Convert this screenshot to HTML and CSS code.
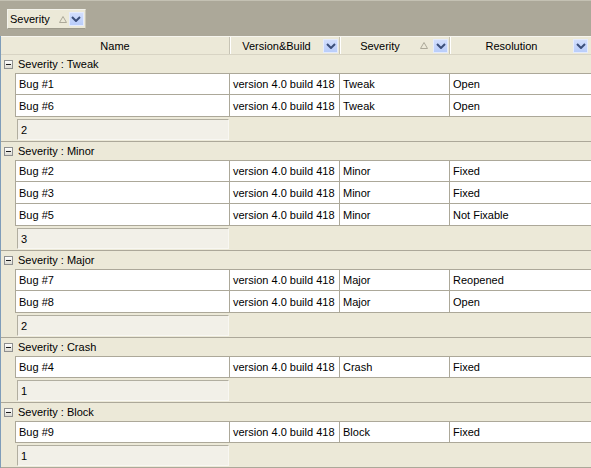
FILE: index.html
```html
<!DOCTYPE html>
<html>
<head>
<meta charset="utf-8">
<link rel="stylesheet" href="styles.css">
</head>
<body>
<div class="panel">
  <div class="gbtn">
    <span class="gtext">Severity</span>
    <svg class="tri" width="8" height="7" viewBox="0 0 8 7"><polygon points="4,0.5 7.5,6.5 0.5,6.5" fill="none" stroke="#aca899" stroke-width="1"/></svg>
    <span class="dd"><svg width="10" height="6" viewBox="0 0 10 6"><path d="M1 1 L5 5 L9 1" fill="none" stroke="#3b4f7a" stroke-width="2"/></svg></span>
  </div>
</div>
<div class="grid">
  <div class="hdr">
    <div class="hc hname"><span class="ht">Name</span></div>
    <div class="hc"><span class="ht">Version&amp;Build</span><span class="dd"><svg width="10" height="6" viewBox="0 0 10 6"><path d="M1 1 L5 5 L9 1" fill="none" stroke="#3b4f7a" stroke-width="2"/></svg></span></div>
    <div class="hc"><span class="ht">Severity</span><svg class="tri" width="8" height="7" viewBox="0 0 8 7"><polygon points="4,0.5 7.5,6.5 0.5,6.5" fill="none" stroke="#aca899" stroke-width="1"/></svg><span class="dd"><svg width="10" height="6" viewBox="0 0 10 6"><path d="M1 1 L5 5 L9 1" fill="none" stroke="#3b4f7a" stroke-width="2"/></svg></span></div>
    <div class="hc hlast"><span class="ht">Resolution</span><span class="dd"><svg width="10" height="6" viewBox="0 0 10 6"><path d="M1 1 L5 5 L9 1" fill="none" stroke="#3b4f7a" stroke-width="2"/></svg></span></div>
  </div>

  <div class="grp"><span class="minus"></span>Severity : Tweak</div>
  <div class="row"><div class="c">Bug #1</div><div class="c">version 4.0 build 418</div><div class="c">Tweak</div><div class="c">Open</div></div>
  <div class="row"><div class="c">Bug #6</div><div class="c">version 4.0 build 418</div><div class="c">Tweak</div><div class="c">Open</div></div>
  <div class="sum"><div class="sbox">2</div></div>

  <div class="grp"><span class="minus"></span>Severity : Minor</div>
  <div class="row"><div class="c">Bug #2</div><div class="c">version 4.0 build 418</div><div class="c">Minor</div><div class="c">Fixed</div></div>
  <div class="row"><div class="c">Bug #3</div><div class="c">version 4.0 build 418</div><div class="c">Minor</div><div class="c">Fixed</div></div>
  <div class="row"><div class="c">Bug #5</div><div class="c">version 4.0 build 418</div><div class="c">Minor</div><div class="c">Not Fixable</div></div>
  <div class="sum"><div class="sbox">3</div></div>

  <div class="grp"><span class="minus"></span>Severity : Major</div>
  <div class="row"><div class="c">Bug #7</div><div class="c">version 4.0 build 418</div><div class="c">Major</div><div class="c">Reopened</div></div>
  <div class="row"><div class="c">Bug #8</div><div class="c">version 4.0 build 418</div><div class="c">Major</div><div class="c">Open</div></div>
  <div class="sum"><div class="sbox">2</div></div>

  <div class="grp"><span class="minus"></span>Severity : Crash</div>
  <div class="row"><div class="c">Bug #4</div><div class="c">version 4.0 build 418</div><div class="c">Crash</div><div class="c">Fixed</div></div>
  <div class="sum"><div class="sbox">1</div></div>

  <div class="grp"><span class="minus"></span>Severity : Block</div>
  <div class="row"><div class="c">Bug #9</div><div class="c">version 4.0 build 418</div><div class="c">Block</div><div class="c">Fixed</div></div>
  <div class="sum"><div class="sbox">1</div></div>
</div>
</body>
</html>
```
FILE: styles.css
```css
html, body {
  margin: 0;
  padding: 0;
  width: 591px;
  height: 468px;
  overflow: hidden;
  background: #ece9d8;
  font-family: "Liberation Sans", Arial, sans-serif;
  font-size: 11px;
  color: #000;
}
.panel {
  height: 36px;
  background: #aca899;
  border-top: 1px solid #c4c1b3;
  box-sizing: border-box;
  padding: 8px 0 0 7px;
}
.gbtn {
  display: inline-flex;
  align-items: center;
  height: 20px;
  width: 79px;
  box-sizing: border-box;
  background: #ece9d8;
  border: 1px solid #f4f3ec;
  border-right-color: #c9c6b6;
  border-bottom-color: #9d9a8b;
  padding-left: 2px;
}
.gtext { font-size: 11px; }
.gbtn .tri { margin-left: 9px; }
.gbtn .dd { margin-left: 2px; }
.dd {
  display: inline-flex;
  align-items: center;
  justify-content: center;
  width: 15px;
  height: 14px;
  box-sizing: border-box;
  background: linear-gradient(#d2defc, #b9cdfa);
  border: 1px solid #e4ebfd;
}
.grid {
  border-left: 1px solid #7f9db9;
}
.hdr {
  display: grid;
  grid-template-columns: 229px 110px 110px 1fr;
  height: 19px;
  background: #ece9d8;
  border-bottom: 1px solid #d8d4c4;
  border-top: 1px solid #f6f5ee;
  box-sizing: border-box;
}
.hc {
  display: flex;
  align-items: center;
  border-right: 1px solid #c7c4b5;
  box-shadow: inset 1px 0 0 #fff;
  padding-right: 1px;
}
.hname { box-shadow: none; padding-right: 0; }
.hlast { border-right: none; padding-right: 3px; }
.ht {
  flex: 1;
  text-align: center;
}
.hc .tri { margin-right: 5px; }
.grp {
  display: flex;
  align-items: center;
  height: 18px;
  box-sizing: border-box;
  padding-left: 3px;
  background: #ece9d8;
}
.minus {
  width: 9px;
  height: 9px;
  box-sizing: border-box;
  border: 1px solid #8e8f8f;
  background: linear-gradient(#ffffff, #dcdbd2);
  margin-right: 5px;
  position: relative;
}
.minus::after {
  content: "";
  position: absolute;
  left: 1px;
  top: 3px;
  width: 5px;
  height: 1px;
  background: #1c1c1c;
}
.row {
  display: grid;
  grid-template-columns: 14px 215px 110px 110px 1fr;
  height: 22px;
}
.row::before {
  content: "";
  background: #ece9d8;
}
.grp + .row .c {
  border-top: 1px solid #aca899;
}
.c {
  background: #fff;
  border-right: 1px solid #aca899;
  border-bottom: 1px solid #aca899;
  display: flex;
  align-items: center;
  padding-left: 3px;
  white-space: nowrap;
  overflow: hidden;
  color: #000;
}
.row .c:first-child { border-left: 1px solid #aca899; }
.row .c:last-child { border-right: none; }
.sum {
  height: 25px;
  box-sizing: border-box;
  padding: 2px 0 0 16px;
  border-bottom: 1px solid #aca899;
  background: #ece9d8;
}
.sbox {
  width: 212px;
  height: 21px;
  box-sizing: border-box;
  background: #f2f0e8;
  border-top: 1px solid #b1aea0;
  border-left: 1px solid #b1aea0;
  border-right: 1px solid #f8f7f2;
  border-bottom: 1px solid #f8f7f2;
  display: flex;
  align-items: center;
  padding-left: 3px;
  color: #000;
}
```
